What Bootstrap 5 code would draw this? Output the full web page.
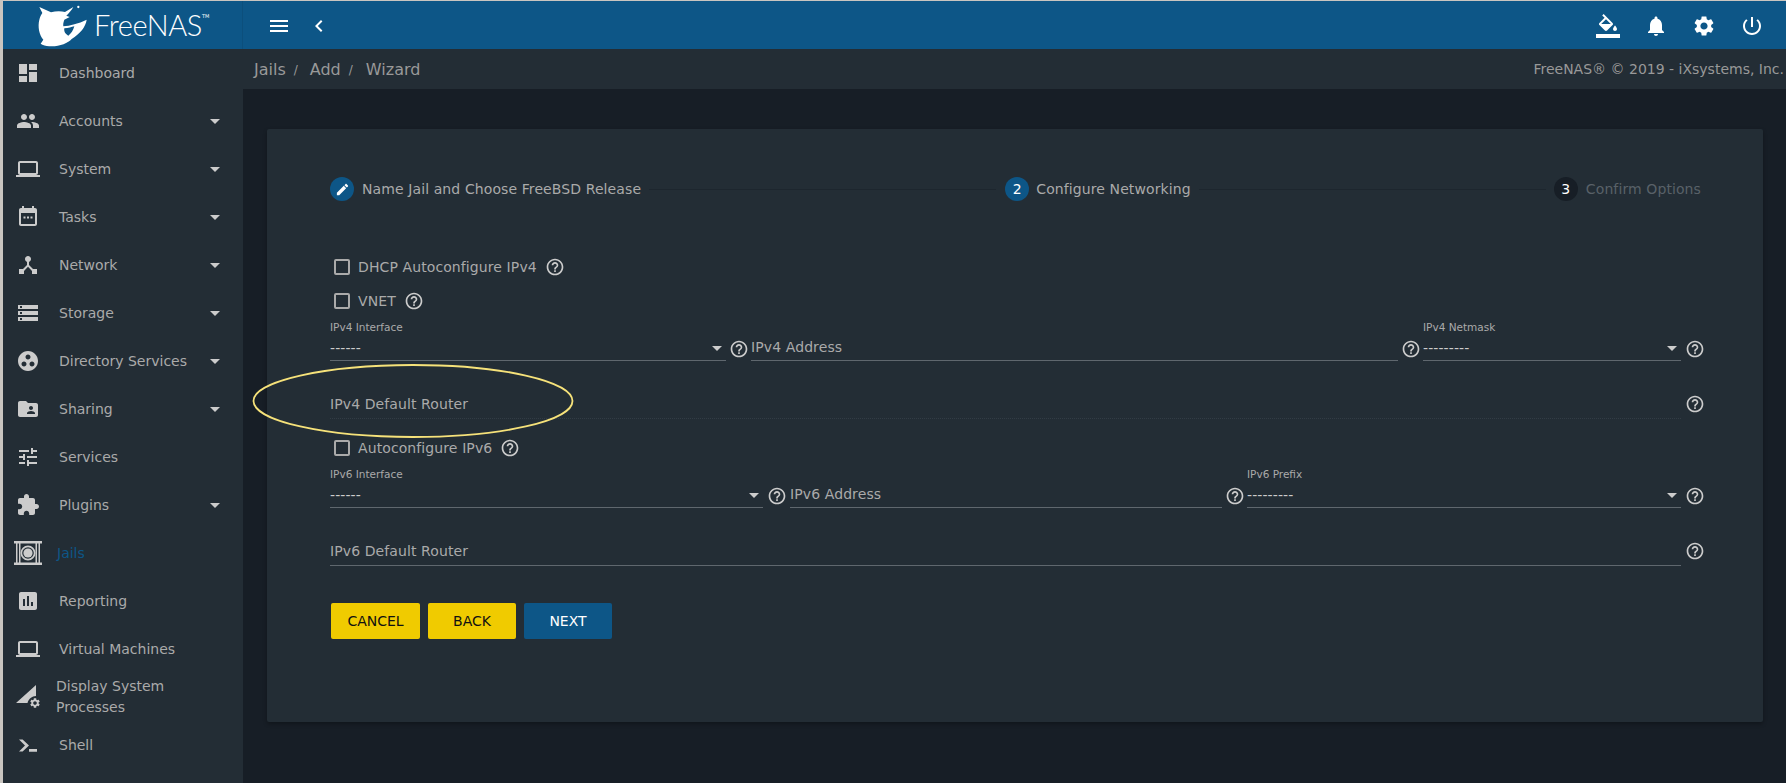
<!doctype html>
<html lang="en">
<head>
<meta charset="utf-8">
<title>FreeNAS</title>
<link href="https://cdn.jsdelivr.net/npm/bootstrap@5.3.0/dist/css/bootstrap.min.css" rel="stylesheet">
<style>
html,body{height:100%;overflow:hidden}
body{background:#c9c5c0;font-family:"DejaVu Sans",sans-serif;font-size:14px;color:#aaa;padding:1px 0 0 3px}
svg{fill:currentColor;display:block;flex:none}
.shell-wrap{height:782px}
.brand-bar{height:48px;background:#0d5687;color:#fff;padding-top:2px}
.logo-cell{width:240px;flex:none;padding-left:32px;margin-top:-2px;height:48px;border-right:1px solid #0c4f7c}
.logo-word{font-family:"Lato",sans-serif;font-weight:300;font-size:29px;line-height:48px;margin-left:-1px;letter-spacing:-.4px}
.logo-tm{font-size:5px;align-self:flex-start;margin-top:12px}
.bar-tools{padding-left:24px;gap:16px;min-width:0}
.bar-right{padding-right:22px;gap:24px}
.side-menu{width:240px;flex:none;background:#232d35;height:734px}
.side-item{height:48px;color:#aaa;padding-left:11px;text-decoration:none}
.side-ico{width:27px;display:flex;justify-content:center;color:#ccc}
.side-txt{margin-left:18px;line-height:21px}
.side-caret{width:0;height:0;border-left:5px solid transparent;border-right:5px solid transparent;border-top:5px solid #ccc;margin-left:auto;margin-right:23px}
.side-active .side-txt{color:#0d5687;margin-left:16px}
.side-two .side-txt{margin-left:15px;width:130px}
.main-pane{background:#171e26;min-width:0}
.crumb-bar{height:40px;background:#232d35;padding:0 2px 0 11px;font-size:16px;color:#999}
.crumb-item{padding-top:2px}
.crumb-sep{font-size:12px;margin:0 12px 0 8px;padding-top:2px}
.crumb-sep.crumb-last{margin-right:13px}
.crumb-copy{font-size:14px;margin-left:auto}
.form-panel{margin:40px 23px 0 24px;height:593px;background:#232d35;padding:48px 54px 0 63px;box-shadow:0 2px 4px rgba(0,0,0,.3);border-radius:2px;letter-spacing:.1px}
.step-row{height:24px;margin-bottom:49px}
.step-dot{width:24px;height:24px;border-radius:50%;background:#0d5687;color:#fff;display:flex;align-items:center;justify-content:center;font-size:14px}
.step-mid{margin-left:9px}
.step-off{background:#171e26;margin-left:8px}
.step-txt{margin:0 8px;white-space:nowrap}
.step-txt.step-after{margin-left:7px}
.step-dim{color:#596168}
.step-line{flex:1;height:1px;background:#1d262e}
.check-row{height:34px;padding-left:4px}
.check-gap{margin-top:12px}
.check-box{width:16px;height:16px;border:2px solid #aaa;border-radius:2px;margin-right:8px}
.tip{width:20px;height:20px;color:#ccc}
.check-row .tip{margin-left:8px}
.field-row{height:44px}
.field-cap{height:18px;font-size:10.5px;line-height:18px;white-space:nowrap;letter-spacing:0}
.field-val{height:25px;border-bottom:1px solid #5f676e;font-size:14px;line-height:22px}
.field-val.is-select{color:#ccc}
.field-caret{width:0;height:0;border-left:5px solid transparent;border-right:5px solid transparent;border-top:5px solid #ccc;margin-right:4px}
.tip-cell{width:25px;flex:none;display:flex;justify-content:center;align-items:center;padding-top:17px}
.tip-wide{width:27px}
.tip-end{width:28px}
.w-a4{width:396px}.w-b4{width:647px}.w-c4{width:258px}
.w-a6{width:433px}.w-b6{width:432px}.w-c6{width:434px}
.wide-row{height:57px}
.wide-line{flex:1;height:25px;line-height:20px;border-bottom:1px solid #5f676e}
.wide-faint{border-bottom:1px dotted #323c45}
.wide-row .tip-cell{padding:0 0 5px}
.btn-wiz{width:89px;height:36px;border-radius:2px;font-size:14px;padding:0;border:0;margin-right:7px}
.btn-yel,.btn-yel:hover{background:#f0cb00;color:#111}
.btn-blu,.btn-blu:hover{background:#0d5687;color:#fff;width:88px}
.btn-yel.btn-narrow{width:88px;margin-left:1px;margin-right:8px}
.btn-row{margin-top:37px;padding-left:1px}
.call-ring{position:absolute;left:252px;top:363px;pointer-events:none}
</style>
</head>
<body class="position-relative">
<svg width="0" height="0" class="position-absolute">
  <symbol id="i-help" viewBox="0 0 24 24"><path d="M11 18h2v-2h-2v2zm1-16C6.48 2 2 6.48 2 12s4.48 10 10 10 10-4.48 10-10S17.52 2 12 2zm0 18c-4.41 0-8-3.59-8-8s3.59-8 8-8 8 3.59 8 8-3.59 8-8 8zm0-14c-2.21 0-4 1.79-4 4h2c0-1.1.9-2 2-2s2 .9 2 2c0 2-3 1.75-3 5h2c0-2.25 3-2.5 3-5 0-2.21-1.79-4-4-4z"/></symbol>
  <symbol id="i-gear" viewBox="0 0 24 24"><path d="M19.14 12.94c.04-.3.06-.61.06-.94 0-.32-.02-.64-.07-.94l2.03-1.58c.18-.14.23-.41.12-.61l-1.92-3.32c-.12-.22-.37-.29-.59-.22l-2.39.96c-.5-.38-1.03-.7-1.62-.94l-.36-2.54c-.04-.24-.24-.41-.48-.41h-3.84c-.24 0-.43.17-.47.41l-.36 2.54c-.59.24-1.13.57-1.62.94l-2.39-.96c-.22-.08-.47 0-.59.22L2.74 8.87c-.12.21-.08.47.12.61l2.03 1.58c-.05.3-.09.63-.09.94s.02.64.07.94l-2.03 1.58c-.18.14-.23.41-.12.61l1.92 3.32c.12.22.37.29.59.22l2.39-.96c.5.38 1.03.7 1.62.94l.36 2.54c.05.24.24.41.48.41h3.84c.24 0 .44-.17.47-.41l.36-2.54c.59-.24 1.13-.56 1.62-.94l2.39.96c.22.08.47 0 .59-.22l1.92-3.32c.12-.22.07-.47-.12-.61l-2.01-1.58zM12 15.6c-1.98 0-3.6-1.62-3.6-3.6s1.62-3.6 3.6-3.6 3.6 1.62 3.6 3.6-1.62 3.6-3.6 3.6z"/></symbol>
  <symbol id="i-laptop" viewBox="0 0 24 24"><path d="M20 18c1.1 0 1.99-.9 1.99-2L22 6c0-1.1-.9-2-2-2H4c-1.1 0-2 .9-2 2v10c0 1.1.9 2 2 2H0v2h24v-2h-4zM4 6h16v10H4V6z"/></symbol>
</svg>
<div class="shell-wrap d-flex flex-column">
  <header class="brand-bar d-flex align-items-center">
    <div class="logo-cell d-flex align-items-center">
      <svg width="60" height="45" viewBox="0 0 180 135" fill="#fff"><path fill-rule="evenodd" d="M13 12 L48 28 C62 24 78 24 90 27 L115 12 C110 22 100 32 94 38 L104 42 L88 50 C85 58 84 64 85 70 C105 68 130 62 155 50 C152 72 135 92 110 108 C100 120 75 130 50 130 C40 130 30 128 22 125 L17 122 L25 110 C12 95 8 70 13 50 C15 42 18 36 22 30 Z M88 76 C100 76 110 72 118 70 C115 82 108 92 100 98 C92 94 86 86 88 76 Z"/><circle cx="130" cy="12" r="3.5"/></svg>
      <span class="logo-word">FreeNAS</span><span class="logo-tm">TM</span>
    </div>
    <div class="bar-tools d-flex align-items-center flex-grow-1">
      <svg width="24" height="24" viewBox="0 0 24 24"><path d="M3 18h18v-2H3v2zm0-5h18v-2H3v2zm0-7v2h18V6H3z"/></svg>
      <svg width="24" height="24" viewBox="0 0 24 24"><path d="M15.41 7.41L14 6l-6 6 6 6 1.41-1.41L10.83 12z"/></svg>
      <div class="bar-right d-flex align-items-center ms-auto">
        <svg width="24" height="24" viewBox="0 0 24 24"><path d="M16.56 8.94L7.62 0 6.21 1.41l2.38 2.38-5.15 5.15c-.59.59-.59 1.54 0 2.12l5.5 5.5c.29.29.68.44 1.06.44s.77-.15 1.06-.44l5.5-5.5c.59-.58.59-1.53 0-2.12zM5.21 10L10 5.21 14.79 10H5.21zM19 11.5s-2 2.17-2 3.5c0 1.1.9 2 2 2s2-.9 2-2c0-1.33-2-3.5-2-3.5zM0 20h24v4H0z"/></svg>
        <svg width="24" height="24" viewBox="0 0 24 24"><path d="M12 22c1.1 0 2-.9 2-2h-4c0 1.1.89 2 2 2zm6-6v-5c0-3.07-1.64-5.64-4.5-6.32V4c0-.83-.67-1.5-1.5-1.5s-1.5.67-1.5 1.5v.68C7.63 5.36 6 7.92 6 11v5l-2 2v1h16v-1l-2-2z"/></svg>
        <svg width="24" height="24"><use href="#i-gear"/></svg>
        <svg width="24" height="24" viewBox="0 0 24 24"><path d="M13 3h-2v10h2V3zm4.83 2.17l-1.42 1.42C17.99 7.86 19 9.81 19 12c0 3.87-3.13 7-7 7s-7-3.13-7-7c0-2.19 1.01-4.14 2.58-5.42L6.17 5.17C4.23 6.82 3 9.26 3 12c0 4.97 4.03 9 9 9s9-4.03 9-9c0-2.74-1.23-5.18-3.17-6.83z"/></svg>
      </div>
    </div>
  </header>
  <div class="d-flex flex-grow-1">
    <nav class="side-menu d-flex flex-column">
      <a class="side-item d-flex align-items-center"><span class="side-ico"><svg width="24" height="24" viewBox="0 0 24 24"><path d="M3 13h8V3H3v10zm0 8h8v-6H3v6zm10 0h8V11h-8v10zm0-18v6h8V3h-8z"/></svg></span><span class="side-txt">Dashboard</span></a>
      <a class="side-item d-flex align-items-center"><span class="side-ico"><svg width="24" height="24" viewBox="0 0 24 24"><path d="M16 11c1.66 0 2.99-1.34 2.99-3S17.66 5 16 5c-1.66 0-3 1.34-3 3s1.34 3 3 3zm-8 0c1.66 0 2.99-1.34 2.99-3S9.66 5 8 5C6.34 5 5 6.34 5 8s1.34 3 3 3zm0 2c-2.33 0-7 1.17-7 3.5V19h14v-2.5c0-2.33-4.67-3.5-7-3.5zm8 0c-.29 0-.62.02-.97.05 1.16.84 1.97 1.97 1.97 3.45V19h6v-2.5c0-2.33-4.67-3.5-7-3.5z"/></svg></span><span class="side-txt">Accounts</span><i class="side-caret"></i></a>
      <a class="side-item d-flex align-items-center"><span class="side-ico"><svg width="24" height="24"><use href="#i-laptop"/></svg></span><span class="side-txt">System</span><i class="side-caret"></i></a>
      <a class="side-item d-flex align-items-center"><span class="side-ico"><svg width="24" height="24" viewBox="0 0 24 24"><path d="M19 3h-1V1h-2v2H8V1H6v2H5c-1.11 0-2 .9-2 2v14c0 1.1.89 2 2 2h14c1.1 0 2-.9 2-2V5c0-1.1-.9-2-2-2zm0 16H5V8h14v11zM7.5 11.5h2v2h-2zm3.5 0h2v2h-2zm3.5 0h2v2h-2z"/></svg></span><span class="side-txt">Tasks</span><i class="side-caret"></i></a>
      <a class="side-item d-flex align-items-center"><span class="side-ico"><svg width="24" height="24" viewBox="0 0 24 24"><path d="M17 16l-4-4V8.82C14.16 8.4 15 7.3 15 6c0-1.66-1.34-3-3-3S9 4.34 9 6c0 1.3.84 2.4 2 2.82V12l-4 4H3v5h5v-3.05l4-4.2 4 4.2V21h5v-5h-4z"/></svg></span><span class="side-txt">Network</span><i class="side-caret"></i></a>
      <a class="side-item d-flex align-items-center"><span class="side-ico"><svg width="24" height="24" viewBox="0 0 24 24"><path d="M2 20h20v-4H2v4zm2-3h2v2H4v-2zM2 4v4h20V4H2zm4 3H4V5h2v2zm-4 7h20v-4H2v4zm2-3h2v2H4v-2z"/></svg></span><span class="side-txt">Storage</span><i class="side-caret"></i></a>
      <a class="side-item d-flex align-items-center"><span class="side-ico"><svg width="24" height="24" viewBox="0 0 24 24"><path d="M12 2C6.48 2 2 6.48 2 12s4.48 10 10 10 10-4.48 10-10S17.52 2 12 2zM8 17.5c-1.38 0-2.5-1.12-2.5-2.5s1.12-2.5 2.5-2.5 2.5 1.12 2.5 2.5-1.12 2.5-2.5 2.5zM9.5 8c0-1.38 1.12-2.5 2.5-2.5s2.5 1.12 2.5 2.5-1.12 2.5-2.5 2.5S9.5 9.38 9.5 8zm6.5 9.5c-1.38 0-2.5-1.12-2.5-2.5s1.12-2.5 2.5-2.5 2.5 1.12 2.5 2.5-1.12 2.5-2.5 2.5z"/></svg></span><span class="side-txt">Directory Services</span><i class="side-caret"></i></a>
      <a class="side-item d-flex align-items-center"><span class="side-ico"><svg width="24" height="24" viewBox="0 0 24 24"><path d="M20 6h-8l-2-2H4c-1.1 0-1.99.9-1.99 2L2 18c0 1.1.9 2 2 2h16c1.1 0 2-.9 2-2V8c0-1.1-.9-2-2-2zm-5 3c1.1 0 2 .9 2 2s-.9 2-2 2-2-.9-2-2 .9-2 2-2zm4 8h-8v-1c0-1.33 2.67-2 4-2s4 .67 4 2v1z"/></svg></span><span class="side-txt">Sharing</span><i class="side-caret"></i></a>
      <a class="side-item d-flex align-items-center"><span class="side-ico"><svg width="24" height="24" viewBox="0 0 24 24"><path d="M3 17v2h6v-2H3zM3 5v2h10V5H3zm10 16v-2h8v-2h-8v-2h-2v6h2zM7 9v2H3v2h4v2h2V9H7zm14 4v-2H11v2h10zm-6-4h2V7h4V5h-4V3h-2v6z"/></svg></span><span class="side-txt">Services</span></a>
      <a class="side-item d-flex align-items-center"><span class="side-ico"><svg width="24" height="24" viewBox="0 0 24 24"><path d="M20.5 11H19V7c0-1.1-.9-2-2-2h-4V3.5C13 2.12 11.88 1 10.5 1S8 2.12 8 3.5V5H4c-1.1 0-1.99.9-1.99 2v3.8H3.5c1.49 0 2.7 1.21 2.7 2.7s-1.21 2.7-2.7 2.7H2V20c0 1.1.9 2 2 2h3.8v-1.5c0-1.49 1.21-2.7 2.7-2.7 1.49 0 2.7 1.21 2.7 2.7V22H17c1.1 0 2-.9 2-2v-4h1.5c1.38 0 2.5-1.12 2.5-2.5S21.88 11 20.5 11z"/></svg></span><span class="side-txt">Plugins</span><i class="side-caret"></i></a>
      <a class="side-item side-active d-flex align-items-center"><span class="side-ico"><svg width="28" height="24" viewBox="0 0 28 24" fill="#ccc"><path d="M0 0h28v2.5H0zM0 21.5h28V24H0zM2 2.5h1.5v19H2zM5 2.5h1.5v19H5zM21.5 2.5H23v19h-1.5zM24.5 2.5H26v19h-1.5z"/><path fill-rule="evenodd" d="M14 4.5a7.5 7.5 0 1 0 0 15 7.5 7.5 0 0 0 0-15zm0 1.7a5.8 5.8 0 1 1 0 11.6 5.8 5.8 0 0 1 0-11.6z"/><circle cx="14" cy="12" r="4.6"/></svg></span><span class="side-txt">Jails</span></a>
      <a class="side-item d-flex align-items-center"><span class="side-ico"><svg width="24" height="24" viewBox="0 0 24 24"><path d="M19 3H5c-1.1 0-2 .9-2 2v14c0 1.1.9 2 2 2h14c1.1 0 2-.9 2-2V5c0-1.1-.9-2-2-2zM9 17H7v-7h2v7zm4 0h-2V7h2v10zm4 0h-2v-4h2v4z"/></svg></span><span class="side-txt">Reporting</span></a>
      <a class="side-item d-flex align-items-center"><span class="side-ico"><svg width="24" height="24"><use href="#i-laptop"/></svg></span><span class="side-txt">Virtual Machines</span></a>
      <a class="side-item side-two d-flex align-items-center"><span class="side-ico"><svg width="24" height="24" viewBox="0 0 24 24"><path d="M0 18 L20 0 V11 C16 11 12.5 14 11.5 18 Z"/><use href="#i-gear" x="13" y="12" width="12" height="12"/></svg></span><span class="side-txt">Display System Processes</span></a>
      <a class="side-item d-flex align-items-center"><span class="side-ico"><svg width="24" height="24" viewBox="0 0 24 24"><path d="M3 6.5h3.6L13 12.5l-6.4 6H3l6-6zM13 16h8v2.8h-8z"/></svg></span><span class="side-txt">Shell</span></a>
    </nav>
    <main class="main-pane flex-grow-1">
      <div class="crumb-bar d-flex align-items-center">
        <span class="crumb-item">Jails</span><span class="crumb-sep">/</span><span class="crumb-item">Add</span><span class="crumb-sep crumb-last">/</span><span class="crumb-item">Wizard</span>
        <span class="crumb-copy">FreeNAS® © 2019 - iXsystems, Inc.</span>
      </div>
      <section class="form-panel">
        <div class="step-row d-flex align-items-center">
          <span class="step-dot"><svg width="15" height="15" viewBox="0 0 24 24"><path d="M3 17.25V21h3.75L17.81 9.94l-3.75-3.75L3 17.25zM20.71 7.04c.39-.39.39-1.02 0-1.41l-2.34-2.34c-.39-.39-1.02-.39-1.41 0l-1.83 1.83 3.75 3.75 1.83-1.83z"/></svg></span>
          <span class="step-txt">Name Jail and Choose FreeBSD Release</span>
          <i class="step-line"></i>
          <span class="step-dot step-mid">2</span>
          <span class="step-txt step-after">Configure Networking</span>
          <i class="step-line"></i>
          <span class="step-dot step-off">3</span>
          <span class="step-txt step-dim">Confirm Options</span>
        </div>
        <div class="check-row d-flex align-items-center"><i class="check-box"></i><span>DHCP Autoconfigure IPv4</span><svg class="tip"><use href="#i-help"/></svg></div>
        <div class="check-row d-flex align-items-center"><i class="check-box"></i><span>VNET</span><svg class="tip"><use href="#i-help"/></svg></div>
        <div class="field-row d-flex">
          <div class="w-a4"><div class="field-cap">IPv4 Interface</div><div class="field-val is-select d-flex justify-content-between align-items-center"><span>------</span><i class="field-caret"></i></div></div>
          <div class="tip-cell"><svg class="tip"><use href="#i-help"/></svg></div>
          <div class="w-b4"><div class="field-cap"></div><div class="field-val">IPv4 Address</div></div>
          <div class="tip-cell"><svg class="tip"><use href="#i-help"/></svg></div>
          <div class="w-c4"><div class="field-cap">IPv4 Netmask</div><div class="field-val is-select d-flex justify-content-between align-items-center"><span>---------</span><i class="field-caret"></i></div></div>
          <div class="tip-cell tip-end"><svg class="tip"><use href="#i-help"/></svg></div>
        </div>
        <div class="wide-row d-flex align-items-end">
          <div class="wide-line wide-faint">IPv4 Default Router</div>
          <div class="tip-cell tip-end"><svg class="tip"><use href="#i-help"/></svg></div>
        </div>
        <div class="check-row check-gap d-flex align-items-center"><i class="check-box"></i><span>Autoconfigure IPv6</span><svg class="tip"><use href="#i-help"/></svg></div>
        <div class="field-row d-flex">
          <div class="w-a6"><div class="field-cap">IPv6 Interface</div><div class="field-val is-select d-flex justify-content-between align-items-center"><span>------</span><i class="field-caret"></i></div></div>
          <div class="tip-cell tip-wide"><svg class="tip"><use href="#i-help"/></svg></div>
          <div class="w-b6"><div class="field-cap"></div><div class="field-val">IPv6 Address</div></div>
          <div class="tip-cell"><svg class="tip"><use href="#i-help"/></svg></div>
          <div class="w-c6"><div class="field-cap">IPv6 Prefix</div><div class="field-val is-select d-flex justify-content-between align-items-center"><span>---------</span><i class="field-caret"></i></div></div>
          <div class="tip-cell tip-end"><svg class="tip"><use href="#i-help"/></svg></div>
        </div>
        <div class="wide-row d-flex align-items-end">
          <div class="wide-line">IPv6 Default Router</div>
          <div class="tip-cell tip-end"><svg class="tip"><use href="#i-help"/></svg></div>
        </div>
        <div class="btn-row d-flex">
          <button type="button" class="btn btn-wiz btn-yel">CANCEL</button>
          <button type="button" class="btn btn-wiz btn-yel btn-narrow">BACK</button>
          <button type="button" class="btn btn-wiz btn-blu">NEXT</button>
        </div>
      </section>
    </main>
  </div>
</div>
<svg class="call-ring" width="322" height="76" viewBox="0 0 322 76"><ellipse cx="161" cy="38" rx="159.5" ry="36" fill="none" stroke="#f6e27a" stroke-width="1.8"/></svg>
</body>
</html>
